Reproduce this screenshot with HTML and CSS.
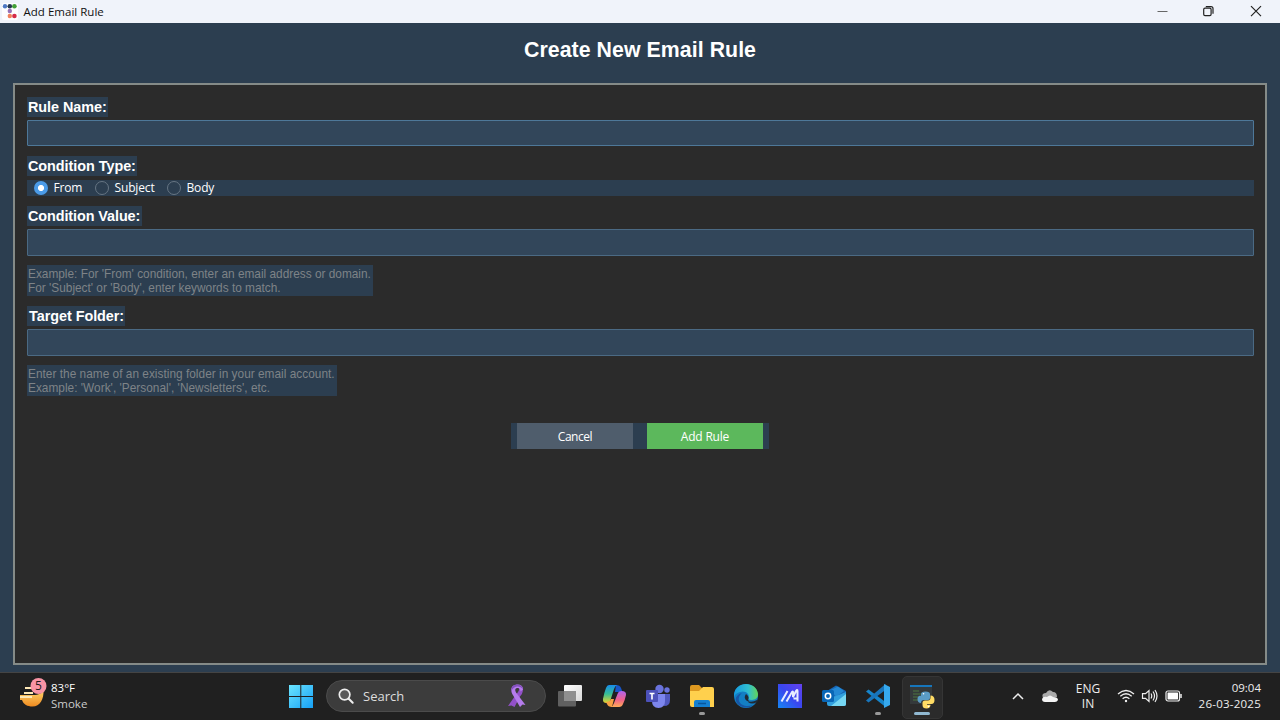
FILE: index.html
```html
<!DOCTYPE html>
<html lang="en">
<head>
<meta charset="utf-8">
<title>Add Email Rule</title>
<link rel="stylesheet" href="styles.css">
</head>
<body>
<header class="titlebar">
  <svg class="app-icon" width="16" height="17" viewBox="0 0 16 17"><rect width="16" height="17" rx="2" fill="#fdfdff"/><circle cx="3" cy="3.300" r="2.200" fill="#4d78c4"/><circle cx="7.800" cy="3.300" r="2.300" fill="#25384f"/><circle cx="12.400" cy="3.300" r="2.300" fill="#43a037"/><circle cx="7.800" cy="8" r="2.200" fill="#9572b8"/><circle cx="7.800" cy="13" r="2.200" fill="#f0805c"/><circle cx="12.400" cy="13" r="2.300" fill="#d42a48"/></svg>
  <span class="titlebar-text">Add Email Rule</span>
  <div class="window-controls">
    <svg width="47" height="23" viewBox="0 0 47 23"><path d="M18.500 11.500h10" stroke="#666"/></svg>
    <svg width="47" height="23" viewBox="0 0 47 23" fill="none" stroke="#222" stroke-width="1.200"><rect x="17.700" y="8.200" width="7.400" height="7.400" rx="1.300"/><path d="M19.800 6.600h5.200a2 2 0 0 1 2 2v5.200"/></svg>
    <svg width="47" height="23" viewBox="0 0 47 23"><path d="M18 6.200l10 10m0-10l-10 10" stroke="#222" stroke-width="1.200"/></svg>
  </div>
</header>
<main class="window">
  <h1 class="heading">Create New Email Rule</h1>
  <form class="panel">
    <label class="label name-label" for="name">Rule Name:</label>
    <input class="field field-focus" id="name">
    <div class="label type-label">Condition Type:</div>
    <div class="radios">
      <span class="radio radio-from"><i class="dot dot-on"></i>From</span>
      <span class="radio radio-subject"><i class="dot"></i>Subject</span>
      <span class="radio"><i class="dot"></i>Body</span>
    </div>
    <label class="label value-label" for="value">Condition Value:</label>
    <input class="field" id="value">
    <p class="hint hint-value">Example: For 'From' condition, enter an email address or domain.<br>For 'Subject' or 'Body', enter keywords to match.</p>
    <label class="label folder-label" for="folder">Target Folder:</label>
    <input class="field" id="folder">
    <p class="hint hint-folder">Enter the name of an existing folder in your email account.<br>Example: 'Work', 'Personal', 'Newsletters', etc.</p>
    <div class="actions">
      <button type="button" class="button cancel">Cancel</button>
      <button type="button" class="button add">Add Rule</button>
    </div>
  </form>
</main>
<footer class="taskbar">
  <div class="weather">
    <svg width="28" height="32" viewBox="0 0 28 32"><defs><linearGradient id="sun" x2="0" y2="1"><stop stop-color="#ffd76d"/><stop offset="1" stop-color="#ef8a20"/></linearGradient></defs><path d="M1 18h13c6 0 9-2 10.500-5 .500 9-3.500 16.500-11 16.500-5 0-9-2-10.500-6.500H1z" fill="url(#sun)"/><path d="M6 11h7m-8 5h9M1 20h12" stroke="#ffe9b6" stroke-width="1.800"/><circle cx="19.500" cy="9" r="8" fill="#f994a5"/><text class="badge-number" x="19.500" y="13.200" text-anchor="middle">5</text></svg>
    <div class="weather-text"><span class="degrees">83°F</span><span>Smoke</span></div>
  </div>
  <nav class="apps">
    <span class="slot"><svg width="44" height="46" viewBox="0 0 44 46"><defs><linearGradient id="win" x2="1" y2="1"><stop stop-color="#6be5ff"/><stop offset="1" stop-color="#16a0f5"/></linearGradient></defs><path d="M10 12h11.300v11H10zm12.300 0H34v11H22.300zM10 24h11.300v11H10zm12.300 0H34v11H22.300z" fill="url(#win)"/></svg></span>
    <div class="search">
      <svg class="lens" width="18" height="18" viewBox="0 0 18 18"><circle cx="7.600" cy="7.600" r="5.300" fill="#5a5a5a" stroke="#eee" stroke-width="1.700"/><path d="M11.700 11.700l4 4" stroke="#eee" stroke-width="2" stroke-linecap="round"/></svg>
      <span class="search-text">Search</span>
      <svg class="ribbon" width="20" height="26" viewBox="0 0 20 26"><path d="M14.500 3.500Q18 8 13 13.500L7.500 24l-3-1.500-3.500.5 8-11.500q4-4 3-7z" fill="#9250c8"/><path d="M4.500 9Q3 2 10 1.500q6 0 6 5l-2.500 2Q13.500 4.500 10 5 7 5.500 9 9.500L18.500 22l-3-.5-2.500 2.500L6.500 13Q5 11 4.500 9z" fill="#b57cec"/><path d="M4.500 8Q3.500 1.800 10 1.500q5 0 6 4.500-2.500-3-6-2.500Q6 4 4.500 8z" fill="#8450bf"/></svg>
    </div>
    <span class="slot"><svg width="44" height="46" viewBox="0 0 44 46"><defs><linearGradient id="view" x2="1" y2="1"><stop stop-color="#fff"/><stop offset="1" stop-color="#d8d8d8"/></linearGradient></defs><rect x="16" y="12" width="18" height="16" rx="1" fill="url(#view)"/><rect x="10" y="18" width="18" height="15.500" rx="1" fill="#606060"/><path d="M16 18h12v10H16z" fill="#8f8f8f"/></svg></span>
    <span class="slot"><svg width="44" height="46" viewBox="0 0 44 46"><defs><linearGradient id="cop1" x2="0" y2="1"><stop stop-color="#178cec"/><stop offset=".5" stop-color="#36bd94"/><stop offset="1" stop-color="#e8d32c"/></linearGradient><linearGradient id="cop2" x2="0" y2="1"><stop stop-color="#af64ef"/><stop offset=".55" stop-color="#ef618a"/><stop offset="1" stop-color="#ffac56"/></linearGradient></defs><path d="M24 12q4 0 5 3l1.500 4H23z" fill="#1755c8"/><path d="M17 12h8q-2 1-3 4l-3.500 11q-1 3-4 3-4 0-3.500-4 1-6 3-11 1-3 3-3z" fill="url(#cop1)"/><path d="M20 34q-4 0-5-3l-1-2q4 0 5-3h3z" fill="#f8a044"/><path d="M27 34h-8q2-1 3-4l3.500-9q1-3 4-3 5 0 4.500 4-1 5-3 9-1 3-4 3z" fill="url(#cop2)"/></svg></span>
    <span class="slot"><svg width="44" height="46" viewBox="0 0 44 46"><circle cx="23.500" cy="16" r="4.200" fill="#6972dc"/><circle cx="31" cy="17" r="2.700" fill="#6972dc"/><path d="M25 21h9v6q0 6-6 6z" fill="#5058be"/><path d="M16 21h13v7q0 7-6.500 7T16 28z" fill="#7d86ed"/><rect x="10" y="17" width="12" height="12" rx="1" fill="#4c51ba"/><path d="M13.500 20.500h5m-2.500 0v6" stroke="#fff" stroke-width="1.600"/></svg></span>
    <span class="slot running"><svg width="44" height="46" viewBox="0 0 44 46"><path d="M10 14q0-2 2-2h7l3 3h11v5H10z" fill="#dd9820"/><path d="M10 18h9l4-4h9q2 0 2 2v18H12q-2 0-2-2z" fill="#ffd04d"/><path d="M14 34v-5q0-2 2-2h12q2 0 2 2v5z" fill="#147fd0"/><path d="M18 30.500h8" stroke="#08569c" stroke-width="1.500"/></svg></span>
    <span class="slot"><svg width="44" height="46" viewBox="0 0 44 46"><defs><linearGradient id="edge" x2="1"><stop stop-color="#159adf"/><stop offset=".6" stop-color="#31bfd0"/><stop offset="1" stop-color="#63d657"/></linearGradient></defs><circle cx="22" cy="23" r="12" fill="#137fc4"/><path d="M10 22C11 7 33 8 34 21c0 6-6 7-10 5 3-5-3-9-8-7-3 1-5 2-6 5z" fill="url(#edge)"/><path d="M18 20c-8 7 0 16 11 12-6 5-15 2-17-4-1-4 2-7 6-8z" fill="#1756a5"/><path d="M22 21q-3 4 1 7 5 2 10-1l1 1-1 1q-5 3-9 0 2-1 0-2 2-3-2-6z" fill="#202a35"/></svg></span>
    <span class="slot"><svg width="44" height="46" viewBox="0 0 44 46"><defs><linearGradient id="asus" x1="0" y1="1" x2="1" y2="0"><stop stop-color="#1687f3"/><stop offset=".5" stop-color="#3947ef"/><stop offset="1" stop-color="#6541ef"/></linearGradient></defs><rect x="10" y="11" width="24" height="24" fill="url(#asus)"/><path d="M13.500 28.500l6-10.500m-1 10.500l5.500-9.500q1-1 1 0v5l3-6q1.500-2 1.500 0v10.500m-4-3h4" fill="none" stroke="#e9edff" stroke-width="2"/></svg></span>
    <span class="slot"><svg width="44" height="46" viewBox="0 0 44 46"><path d="M15 18l9-5.500 10 5.500v8H15z" fill="#1766b7"/><path d="M19 17l7-3.500 6 4.500-8 6z" fill="#2488d3"/><path d="M15 25l9-2 10-4v12q0 2-2 2H17q-2 0-2-2z" fill="#319fdd"/><path d="M19 33l15-12v10q0 2-2 2z" fill="#76d7f2"/><rect x="10" y="17" width="12" height="12" rx="1.500" fill="#0866b6"/><circle cx="16" cy="23" r="2.700" fill="none" stroke="#fff" stroke-width="1.500"/></svg></span>
    <span class="slot running"><svg width="44" height="46" viewBox="0 0 44 46"><path d="M10 18.500l2.500-2 17 12.500v5z" fill="#1685cb"/><path d="M10 27.500l2.500 2 17-12.500v-6z" fill="#1875bb"/><path d="M28 11l6 3v18l-6 3z" fill="#36a9ee"/></svg></span>
    <span class="slot active"><svg width="44" height="46" viewBox="0 0 44 46"><path d="M10 12h22v19H10z" fill="#34393b"/><path d="M10 12h22v2H10z" fill="#1676bc"/><path d="M13 18h6m-6 3h8m-8 3h6m-6 3h5" stroke="#4c7741"/><path d="M21 23v-2q0-2.500 4.500-2.500T30 21v4q0 2-2 2h-4q-3 0-3 3-3.500 0-3.500-4 0-3.500 3.500-3.500h5v.5z" fill="#5a9cc6"/><path d="M30.500 22.500q4 0 4 4.500t-4 4H27v.8h3.500q0 3.700-4 3.700t-4-3.500v-2q0-2.500 2.500-2.500h3q2.500 0 2.500-3z" fill="#ffdc65"/><circle cx="23.500" cy="20.700" r=".8" fill="#fff"/><circle cx="28.500" cy="33.500" r=".8" fill="#fff"/></svg></span>
  </nav>
  <div class="tray">
    <svg width="14" height="12" viewBox="0 0 14 12"><path d="M2 9l5-5 5 5" fill="none" stroke="#eee" stroke-width="1.500"/></svg>
    <svg class="cloud" width="18" height="14" viewBox="0 0 18 14"><path d="M2 9Q0 4 5 4q3-5 7-1 4 0 4 5z" fill="#aaa"/><path d="M4 13q-3 0-3-3 1-3 5-2 3-3 6 0 5 0 5 3-1 2-3 2z" fill="#f4f4f4"/></svg>
    <div class="language"><span>ENG</span><span>IN</span></div>
    <svg class="wifi" width="18" height="16" viewBox="0 0 18 16" fill="none" stroke="#eee" stroke-width="1.300"><path d="M1 6q8-7 16 0M3.300 8.300q5.700-5 11.400 0M5.600 10.700q3.400-3 6.800 0"/><circle cx="9" cy="13" r="1.200" fill="#eee" stroke="none"/></svg>
    <svg class="volume" width="18" height="16" viewBox="0 0 18 16" fill="none" stroke="#eee" stroke-width="1.200"><path d="M1.500 5.700h3L8 2.500v11L4.500 10.400h-3zM10 5.500q1.500 2.500 0 5M12 3.500q3 4.500 0 9M14 2q4 6 0 12"/></svg>
    <svg class="battery" width="18" height="12" viewBox="0 0 18 12"><rect x="1" y="1" width="13.500" height="10" rx="2" fill="none" stroke="#eee" stroke-width="1.200"/><rect x="2.500" y="2.500" width="10.500" height="7" rx=".5" fill="#fff"/><path d="M16 4v4" stroke="#eee" stroke-width="1.500"/></svg>
    <div class="clock"><span>09:04</span><span class="date">26-03-2025</span></div>
  </div>
</footer>
</body>
</html>
```
FILE: styles.css
```css
* { box-sizing: border-box; }
body { margin: 0; width: 1280px; height: 720px; overflow: hidden; display: flex; flex-direction: column; background: #2c3e50; font-family: "Open Sans", "Noto Sans", sans-serif; }
svg { display: block; flex: none; }
.titlebar { height: 23px; flex: none; display: flex; align-items: center; background: #f0f3fa; color: #111; padding-left: 2px; }
.titlebar-text { margin-left: 5.500px; font-size: 11.500px; line-height: 22px; letter-spacing: .02px; }
.window-controls { display: flex; margin-left: auto; }
.window { height: 649px; flex: none; padding: 0 13px 7px; display: flex; flex-direction: column; }
.heading { margin: 0; height: 60px; font: bold 21.300px/54px "Liberation Sans", sans-serif; letter-spacing: .06px; text-align: center; color: #fff; }
.panel { flex: 1; border: 2px solid #858b88; background: #2b2b2b; padding: 12px 12px 0; display: flex; flex-direction: column; align-items: flex-start; }
.label { height: 20px; padding-left: 1px; background: #2c3e50; color: #fff; font: bold 14.400px/20px "Liberation Sans", sans-serif; letter-spacing: -.04px; white-space: nowrap; }
.name-label { width: 81px; }
.type-label { width: 110px; line-height: 21px; }
.value-label { width: 115px; line-height: 21px; letter-spacing: -.08px; }
.folder-label { width: 98px; padding-left: 2px; line-height: 21px; }
.field { width: 1227px; height: 27px; margin: 3px 0 9px; border: 1px solid #4b6a84; border-radius: 1px; background: #32465a; outline: 0; padding: 0; }
.field-focus { height: 26px; margin-bottom: 10px; border-color: #4e7899; }
.radios { width: 1227px; height: 16px; margin: 4px 0 10px; padding-left: 6.500px; background: #2c3e50; display: flex; }
.radio { display: flex; align-items: center; gap: 6px; height: 16px; font-size: 12px; line-height: 18px; letter-spacing: -.15px; color: #fff; }
.radio-from { width: 61px; }
.radio-subject { width: 72px; }
.dot { width: 14px; height: 14px; border: 1px solid #667583; border-radius: 50%; }
.dot-on { border: 0; background: radial-gradient(circle, #fff 0 2.700px, #4b9be8 3.400px); }
.hint { margin: 0 0 10px; height: 31px; padding: 2px 0 0 1px; background: #2c3e50; color: #7e8387; font: 11.850px/14px "Liberation Sans", sans-serif; white-space: nowrap; }
.hint-value { width: 346px; }
.hint-folder { width: 310px; letter-spacing: .02px; }
.actions { align-self: center; width: 258px; height: 26px; margin-top: 17px; padding: 0 6px; background: #2c3e50; display: flex; gap: 14px; }
.button { width: 116px; height: 26px; border: 0; padding: 1px 0 0; font: 12px/25px "Open Sans", sans-serif; letter-spacing: -.2px; color: #fff; }
.cancel { background: #4f5d6c; letter-spacing: -.45px; }
.add { background: #5cb85c; }
.taskbar { height: 48px; flex: none; border-top: 1px solid #444; background: #202020; display: flex; color: #eee; }
.weather { width: 279px; padding: 4px 0 0 19px; display: flex; gap: 4px; }
.weather-text { display: flex; flex-direction: column; padding-top: 3px; font-size: 11.500px; line-height: 16px; color: #ccc; }
.degrees { color: #fff; }
.badge-number { font: 12px "Open Sans", sans-serif; fill: #241b1e; }
.apps { display: flex; }
.slot { width: 44px; height: 47px; position: relative; }
.search { width: 220px; height: 32px; margin: 7px 2px 0 3px; border: 1px solid #4b4b4b; border-radius: 16px; background: #3c3c3c; display: flex; align-items: center; padding: 0 18px 0 10px; }
.search-text { margin-left: 8px; font-size: 13px; color: #ddd; }
.ribbon { margin-left: auto; }
.running::after { content: ""; position: absolute; left: 19px; top: 39px; width: 6px; height: 3px; border-radius: 2px; background: #999; }
.active::before { content: ""; position: absolute; left: 2px; top: 3px; width: 39px; height: 41px; border: 1px solid #353535; border-radius: 5px; background: #2b2b2b; }
.active svg { position: relative; }
.active::after { content: ""; position: absolute; left: 14px; top: 39px; width: 16px; height: 3px; border-radius: 2px; background: #91b9d2; }
.tray { margin-left: auto; width: 269px; padding: 0 19px 2px 0; display: flex; align-items: center; }
.cloud { margin-left: 16px; }
.language { width: 30px; margin-left: 14px; display: flex; flex-direction: column; text-align: center; font-size: 12px; line-height: 15px; }
.wifi { margin-left: 14px; }
.volume { margin-left: 6px; }
.battery { margin-left: 6px; }
.clock { margin-left: auto; display: flex; flex-direction: column; text-align: right; font-size: 11.500px; line-height: 16px; }
.date { letter-spacing: .24px; }
```
